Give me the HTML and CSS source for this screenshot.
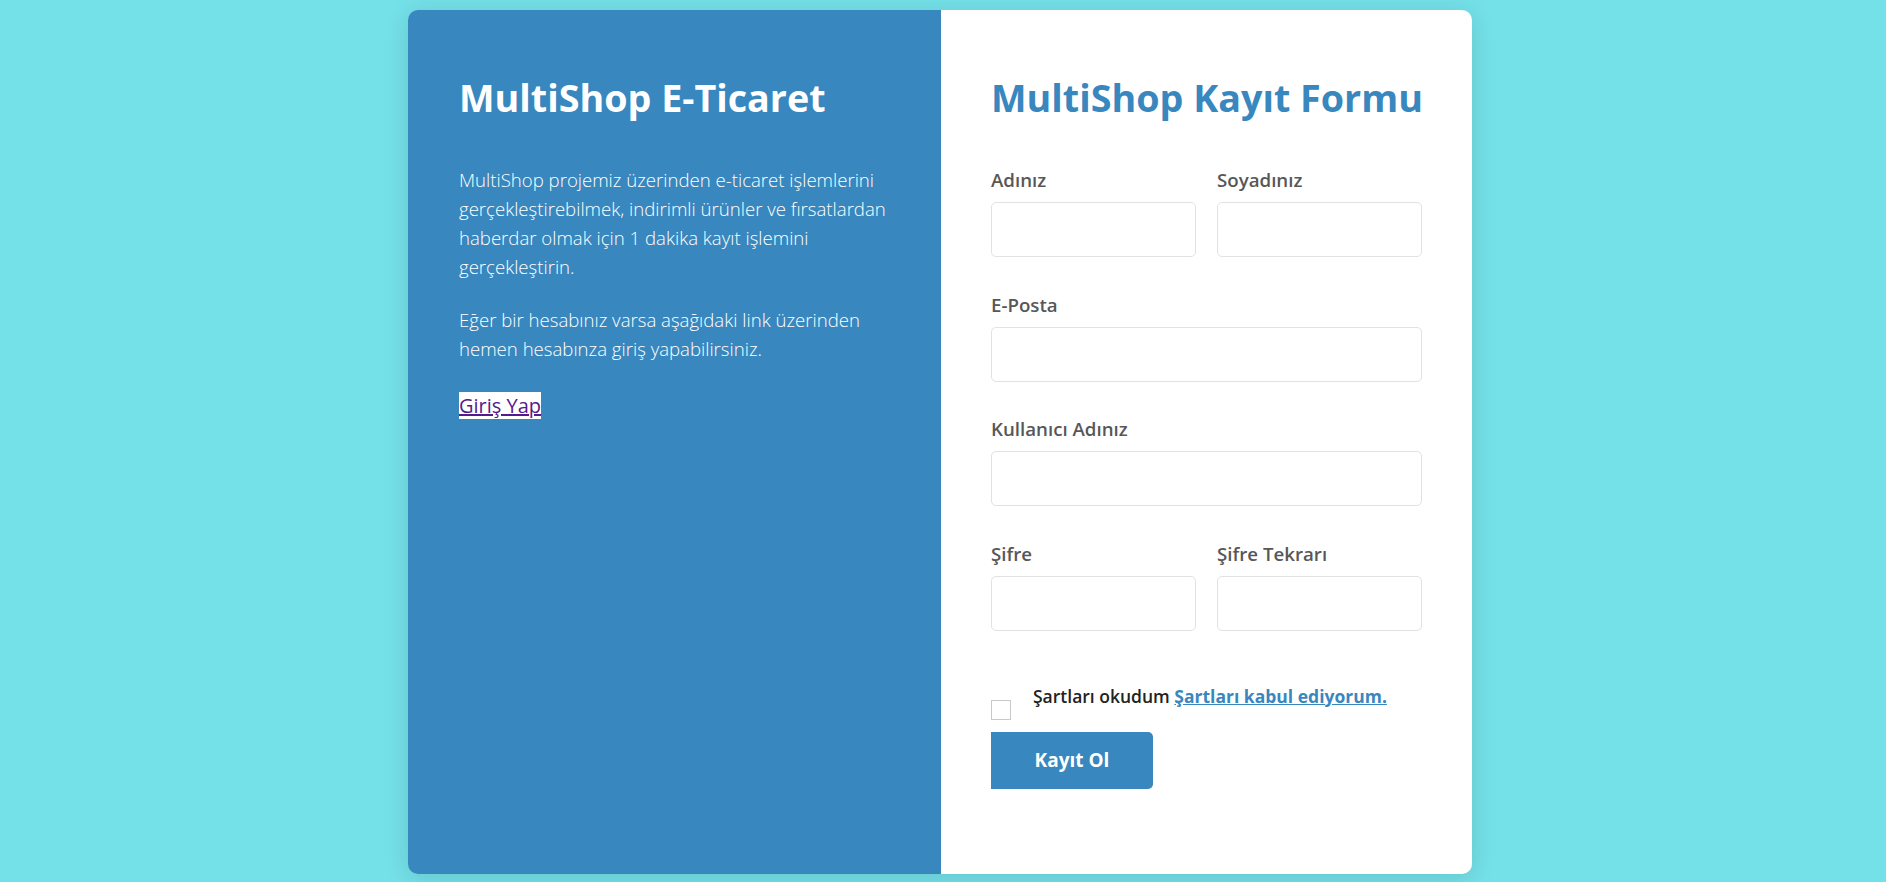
FILE: index.html
```html
<!DOCTYPE html>
<html lang="tr">
<head>
<meta charset="utf-8">
<title>MultiShop Kayıt</title>
<link rel="stylesheet" href="styles.css">
</head>
<body>
<div class="card">
  <section class="info">
    <h1 class="info-title">MultiShop E-Ticaret</h1>
    <p class="info-text">MultiShop projemiz üzerinden e-ticaret işlemlerini gerçekleştirebilmek, indirimli ürünler ve fırsatlardan haberdar olmak için 1 dakika kayıt işlemini gerçekleştirin.</p>
    <p class="info-text second">Eğer bir hesabınız varsa aşağıdaki link üzerinden hemen hesabınza giriş yapabilirsiniz.</p>
    <p class="info-link"><a href="#" class="login-link">Giriş Yap</a></p>
  </section>
  <section class="form-side">
    <h2 class="form-title">MultiShop Kayıt Formu</h2>
    <form class="reg-form">
      <div class="row two">
        <div class="field">
          <label class="lbl">Adınız</label>
          <input class="inp" type="text">
        </div>
        <div class="field">
          <label class="lbl">Soyadınız</label>
          <input class="inp" type="text">
        </div>
      </div>
      <div class="row">
        <div class="field">
          <label class="lbl">E-Posta</label>
          <input class="inp" type="text">
        </div>
      </div>
      <div class="row">
        <div class="field">
          <label class="lbl">Kullanıcı Adınız</label>
          <input class="inp" type="text">
        </div>
      </div>
      <div class="row two">
        <div class="field">
          <label class="lbl">Şifre</label>
          <input class="inp" type="password">
        </div>
        <div class="field">
          <label class="lbl">Şifre Tekrarı</label>
          <input class="inp" type="password">
        </div>
      </div>
      <div class="terms">
        <span class="check"></span>
        <span class="terms-text">Şartları okudum <a href="#" class="terms-link">Şartları kabul ediyorum.</a></span>
      </div>
      <button type="button" class="submit">Kayıt Ol</button>
    </form>
  </section>
</div>
</body>
</html>
```

FILE: styles.css
```css
* { box-sizing: border-box; }
html, body { margin: 0; padding: 0; }
body {
  background: #74e0e8;
  font-family: "Open Sans", "Noto Sans", sans-serif;
  height: 882px;
  overflow: hidden;
  padding-right: 6px;
}
.card {
  width: 1064px;
  height: 864px;
  margin: 10px auto 0;
  display: flex;
  border-radius: 10px;
  overflow: hidden;
  box-shadow: 0 4px 24px rgba(0, 0, 0, 0.12);
}
.info {
  flex: 0 0 533px;
  min-width: 0;
  background: #3887be;
  color: #ffffff;
  padding: 65px 47px 0 51px;
}
.info-title, .form-title {
  margin: 0;
  font-size: 37.7px;
  line-height: 46px;
  font-weight: 700;
  white-space: nowrap;
}
.info-text {
  margin: 44px 0 0;
  font-size: 18.6px;
  line-height: 29px;
  font-weight: 300;
}
.info-text.second { margin-top: 24px; }
.info-link {
  margin: 28px 0 0;
  font-size: 20px;
  line-height: 29px;
}
.login-link {
  color: #551a8b;
  background: #ffffff;
  text-decoration: underline;
}
.form-side {
  flex: 1 1 0;
  min-width: 0;
  background: #ffffff;
  padding: 65px 50px 0 50px;
}
.form-title { color: #3887be; }
.reg-form { margin-top: 46px; }
.row { margin-bottom: 34.5px; }
.row.two {
  display: grid;
  grid-template-columns: minmax(0, 1fr) minmax(0, 1fr);
  column-gap: 21px;
}
.field { display: flex; flex-direction: column; min-width: 0; }
.lbl {
  font-size: 18.7px;
  line-height: 25px;
  font-weight: 600;
  color: #575757;
  margin-bottom: 10px;
}
.inp {
  width: 100%;
  min-width: 0;
  height: 55px;
  border: 1px solid #e2e2e2;
  border-radius: 5px;
  background: #fff;
  font: inherit;
  padding: 0 12px;
  outline: none;
}
.terms {
  display: flex;
  align-items: flex-start;
  margin-top: 53px;
}
.check {
  width: 20px;
  height: 20px;
  border: 1px solid #c9c9c9;
  margin-top: 16px;
  flex: none;
}
.terms-text {
  margin-left: 22px;
  font-size: 17.5px;
  line-height: 24px;
  font-weight: 600;
  color: #222;
}
.terms-link {
  color: #3887be;
  font-weight: 700;
  text-decoration: underline;
}
.submit {
  display: block;
  margin-top: 12px;
  width: 162px;
  height: 57px;
  border: none;
  border-radius: 0 5px 5px 0;
  background: #3887be;
  color: #fff;
  font-family: inherit;
  font-size: 19px;
  font-weight: 700;
  cursor: pointer;
}
```
